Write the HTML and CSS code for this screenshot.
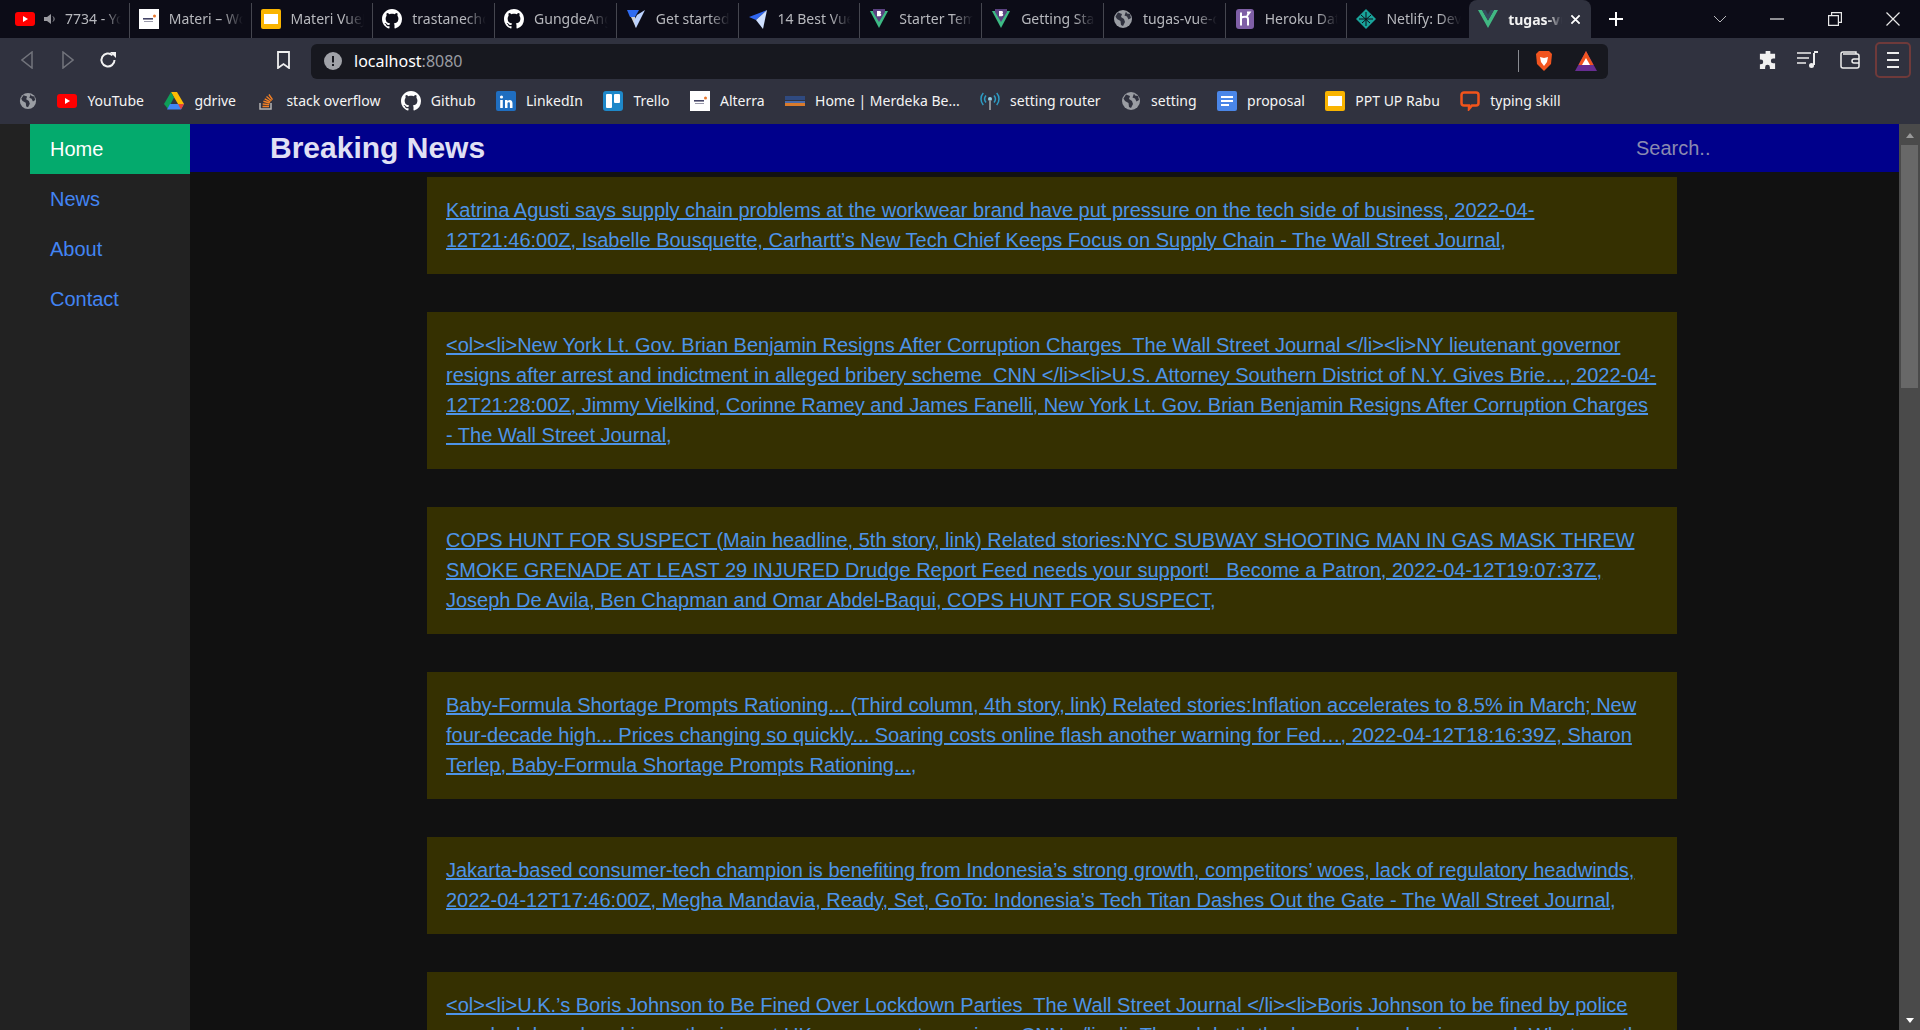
FILE: index.html
```html
<!DOCTYPE html>
<html lang="en">
<head>
<meta charset="utf-8">
<title>tugas-vue</title>
<link rel="stylesheet" href="styles.css">
</head>
<body>
<svg class="defs" width="0" height="0" aria-hidden="true">
  <symbol id="i-yt" viewBox="0 0 20 14"><rect width="20" height="14" rx="3" fill="#f00"/><path d="M8 4l5 3-5 3z" fill="#fff"/></symbol>
  <symbol id="i-alt" viewBox="0 0 20 20"><rect width="20" height="20" fill="#fff"/><rect x="4" y="9" width="10" height="1.6" fill="#446"/><rect x="5" y="12" width="9" height="1" fill="#99a"/><circle cx="15.500" cy="7" r="1.500" fill="#e8762c"/></symbol>
  <symbol id="i-sl" viewBox="0 0 20 20"><rect width="20" height="20" rx="2" fill="#f9b400"/><rect x="3" y="5" width="14" height="10" fill="#fff"/></symbol>
  <symbol id="i-gh" viewBox="0 0 16 16"><path fill="#fff" d="M8 0C3.58 0 0 3.58 0 8c0 3.54 2.29 6.53 5.47 7.59.4.07.55-.17.55-.38 0-.19-.01-.82-.01-1.49-2.01.37-2.53-.49-2.69-.94-.09-.23-.48-.94-.82-1.13-.28-.15-.68-.52-.01-.53.63-.01 1.08.58 1.23.82.72 1.21 1.87.87 2.33.66.07-.52.28-.87.51-1.07-1.78-.2-3.64-.89-3.64-3.95 0-.87.31-1.59.82-2.15-.08-.2-.36-1.02.08-2.12 0 0 .67-.21 2.2.82.64-.18 1.32-.27 2-.27.68 0 1.36.09 2 .27 1.53-1.04 2.2-.82 2.2-.82.44 1.1.16 1.92.08 2.12.51.56.82 1.27.82 2.15 0 3.07-1.87 3.75-3.65 3.95.29.25.54.73.54 1.48 0 1.07-.01 1.93-.01 2.2 0 .21.15.46.55.38A8.013 8.013 0 0016 8c0-4.42-3.58-8-8-8z"/></symbol>
  <symbol id="i-vuetify" viewBox="0 0 20 20"><path d="M10 19L5 8h4l1 3z" fill="#fff" opacity=".8"/><path d="M19 1L10 19 8 12l3-6z" fill="#bcd2ff"/><path d="M1 1h12L9 8H4z" fill="#2f6bf0"/></symbol>
  <symbol id="i-plane" viewBox="0 0 20 20"><path d="M19 1L1 8l7 3z" fill="#2f66f0"/><path d="M19 1L8 11l7 9z" fill="#cfe0ff"/></symbol>
  <symbol id="i-bv" viewBox="0 0 20 20"><path d="M1 2h18L10 19z" fill="#3dba84"/><path d="M4 0h12v3l-6 10-6-10z" fill="#5b4282"/><path d="M8 2h2.700c1.700 0 1.700 2.200.5 2.500 1.500.2 1.400 2.700-.5 2.700H8z" fill="#fff"/></symbol>
  <symbol id="i-globe" viewBox="0 0 20 20"><circle cx="10" cy="10" r="9" fill="#9a9da3"/><path d="M5 3.500l4 1.500-1 3 3 2 1 3-2 4-2-1-.5-4L4 10 2.500 7.500zM13 2.500l1 2 3 .5 1 4-2.500 1.500-1.500-3-2.500-1z" fill="#30323f"/></symbol>
  <symbol id="i-her" viewBox="0 0 20 20"><rect x="1" width="18" height="20" rx="3" fill="#7f5fa6"/><path d="M6 3.500v13M6 9c2-1.500 7-2 7 1v6.500M12 3.500l2.500 0-2.500 3.500" stroke="#fff" stroke-width="2" fill="none"/></symbol>
  <symbol id="i-net" viewBox="0 0 20 20"><path d="M10 0l10 10-10 10L0 10z" fill="#19a39a"/><path d="M3 10h14M10 3v14M5 6l9 8M15 6l-9 8" stroke="#0c0c17" stroke-width="1"/></symbol>
  <symbol id="i-vue" viewBox="0 0 20 18"><path d="M0 0h4l6 10.500L16 0h4L10 18z" fill="#41b883"/><path d="M4 0h3.500L10 4.500 12.500 0H16l-6 10.500z" fill="#35495e"/></symbol>
  <symbol id="i-drive" viewBox="0 0 20 18"><path d="M7 0h6l7 12h-6z" fill="#fbbc04"/><path d="M7 0l3 5.500L4 17 0 12z" fill="#0f9d58"/><path d="M6 12h14l-3 5.500H3z" fill="#4285f4"/><path d="M20 12l-3 5.500L14 12z" fill="#ea4335"/></symbol>
  <symbol id="i-so" viewBox="0 0 20 20"><path d="M4 12v6h11v-6" fill="none" stroke="#b4b4b4" stroke-width="1.500"/><path d="M6.500 15.500h6.500M6.700 13l6.500.6M7.400 10.300l6.300 1.700M8.700 7.800l5.700 3M10.500 5.500l5 4.200M12.900 3.500l3.600 5.200" stroke="#f48024" stroke-width="1.400"/></symbol>
  <symbol id="i-li" viewBox="0 0 20 20"><rect width="20" height="20" rx="2" fill="#1f6ec0"/><circle cx="5.500" cy="6" r="1.600" fill="#fff"/><path d="M4.200 9h2.600v8H4.200zM9 9h2.500v1.200c1.500-2 5-1.500 5 2V17h-2.600v-4.300c0-2-2.400-1.800-2.400 0V17H9z" fill="#fff"/></symbol>
  <symbol id="i-tr" viewBox="0 0 20 20"><rect width="20" height="20" rx="3" fill="#1e88c9"/><rect x="3" y="3" width="6" height="14" rx="1" fill="#fff"/><rect x="11" y="3" width="6" height="9" rx="1" fill="#fff"/></symbol>
  <symbol id="i-mb" viewBox="0 0 20 20"><rect x="0" y="5" width="20" height="4" fill="#2f4a80"/><rect x="0" y="10" width="20" height="2" fill="#4a6aa8"/><rect x="0" y="12" width="20" height="3" fill="#d97a2b"/></symbol>
  <symbol id="i-rt" viewBox="0 0 20 20"><circle cx="10" cy="8" r="2" fill="#8fd0e8"/><path d="M10 9v10" stroke="#8a8d92" stroke-width="2"/><path d="M6 4.500a5.500 5.500 0 000 7M14 4.500a5.500 5.500 0 010 7M3.300 2a9 9 0 000 12M16.700 2a9 9 0 010 12" fill="none" stroke="#2d9cc4" stroke-width="1.500"/></symbol>
  <symbol id="i-doc" viewBox="0 0 20 20"><rect width="20" height="20" rx="2" fill="#4a86e8"/><path d="M4 5h12v2H4zM4 9h12v2H4zM4 13h8v2H4z" fill="#fff"/></symbol>
  <symbol id="i-ty" viewBox="0 0 20 20"><path d="M4 1.500h12a2.500 2.500 0 012.500 2.500v8a2.500 2.500 0 01-2.500 2.500h-4L9 18v-3.500H4A2.500 2.500 0 011.500 12V4A2.500 2.500 0 014 1.500z" fill="none" stroke="#f2541b" stroke-width="2.500"/></symbol>
</svg>

<div class="browser">
  <header class="chrome">
    <div class="tabstrip">
      <div class="tabs">
        <div class="tab tab-first"><svg class="fav fav-yt"><use href="#i-yt"/></svg><svg class="speaker" viewBox="0 0 12 12"><path d="M0 4h3l4-3v10L3 8H0z" fill="#9a9aa0"/><path d="M9 3.500c1.500 1.500 1.500 3.500 0 5" stroke="#9a9aa0" fill="none"/></svg><span class="tab-label">7734 - YouTube</span></div>
        <div class="tab"><svg class="fav"><use href="#i-alt"/></svg><span class="tab-label">Materi – Work</span></div>
        <div class="tab"><svg class="fav"><use href="#i-sl"/></svg><span class="tab-label">Materi VueJS</span></div>
        <div class="tab"><svg class="fav"><use href="#i-gh"/></svg><span class="tab-label">trastanechora</span></div>
        <div class="tab"><svg class="fav"><use href="#i-gh"/></svg><span class="tab-label">GungdeAngga</span></div>
        <div class="tab"><svg class="fav"><use href="#i-vuetify"/></svg><span class="tab-label">Get started</span></div>
        <div class="tab"><svg class="fav"><use href="#i-plane"/></svg><span class="tab-label">14 Best Vue</span></div>
        <div class="tab"><svg class="fav"><use href="#i-bv"/></svg><span class="tab-label">Starter Templates</span></div>
        <div class="tab"><svg class="fav"><use href="#i-bv"/></svg><span class="tab-label">Getting Started</span></div>
        <div class="tab"><svg class="fav"><use href="#i-globe"/></svg><span class="tab-label">tugas-vue-d</span></div>
        <div class="tab"><svg class="fav"><use href="#i-her"/></svg><span class="tab-label">Heroku Data</span></div>
        <div class="tab"><svg class="fav"><use href="#i-net"/></svg><span class="tab-label">Netlify: Dev</span></div>
        <div class="tab tab-active"><svg class="fav fav-vue"><use href="#i-vue"/></svg><span class="tab-label">tugas-vue</span><svg class="tab-close" viewBox="0 0 12 12"><path d="M1.500 1.500l9 9M10.500 1.500l-9 9" stroke="#fff" stroke-width="2"/></svg></div>
      </div>
      <svg class="newtab" viewBox="0 0 16 16"><path d="M8 1v14M1 8h14" stroke="#fff" stroke-width="2"/></svg>
      <div class="winctl">
        <svg class="win-chev" viewBox="0 0 14 8"><path d="M1 1l6 6 6-6" stroke="#b8b8bc" fill="none"/></svg>
        <svg class="win-btn" viewBox="0 0 14 14"><path d="M0 7h14" stroke="#e8e8e8" stroke-width="1.200"/></svg>
        <svg class="win-btn" viewBox="0 0 14 14"><path d="M.6 3.600h9.800v9.800H.6zM3.600 3.600V.6h9.800v9.800h-3" fill="none" stroke="#e8e8e8" stroke-width="1.200"/></svg>
        <svg class="win-btn" viewBox="0 0 14 14"><path d="M.5.500l13 13M13.500.500l-13 13" stroke="#e8e8e8" stroke-width="1.200"/></svg>
      </div>
    </div>

    <div class="toolbar">
      <svg class="tb-back" viewBox="0 0 12 18"><path d="M11 1L1 9l10 8z" fill="none" stroke="#72747c" stroke-width="1.500"/></svg>
      <svg class="tb-fwd" viewBox="0 0 12 18"><path d="M1 1l10 8-10 8z" fill="none" stroke="#72747c" stroke-width="1.500"/></svg>
      <svg class="tb-reload" viewBox="0 0 18 18"><path d="M15.500 9a6.500 6.500 0 11-2-4.700" fill="none" stroke="#f2f2f2" stroke-width="2"/><path d="M11 1h6v6z" fill="#f2f2f2"/></svg>
      <svg class="tb-mark" viewBox="0 0 13 18"><path d="M1 1h11v16l-5.500-4L1 17z" fill="none" stroke="#f0f0f0" stroke-width="1.800"/></svg>
      <div class="urlbar">
        <svg class="url-info" viewBox="0 0 18 18"><circle cx="9" cy="9" r="9" fill="#a0a2a8"/><path d="M8 4h2v6.500H8zM8 12h2v2H8z" fill="#17181f"/></svg>
        <span class="url-text"><span class="url-host">localhost</span>:8080</span>
        <span class="url-div"></span>
        <svg class="url-brave" viewBox="0 0 18 22"><path d="M4 1h10l3 3-1 10-7 7-7-7L1 4z" fill="#f1541f"/><path d="M5 7l4 1 4-1-1 5-3 4-3-4z" fill="#fff"/></svg>
        <svg class="url-bat" viewBox="0 0 22 20"><path d="M11 0l11 20H0z" fill="#662d91"/><path d="M11 0l7.500 14h-15z" fill="#f1541f"/><path d="M11 7l4 7H7z" fill="#fff"/></svg>
      </div>
      <svg class="tb-puzzle" viewBox="0 0 20 20"><path d="M8 1a2.500 2.500 0 015 0v2h5v5h-2a2.500 2.500 0 000 5h2v6h-5.500v-2a2.500 2.500 0 00-5 0v2H2v-5h1a2.500 2.500 0 000-5H2V3h6z" fill="#f0f0f0"/></svg>
      <svg class="tb-list" viewBox="0 0 21 18"><path d="M0 2h14M0 7h12M0 12h9" stroke="#eee" stroke-width="1.700"/><path d="M17 2v12" stroke="#eee" stroke-width="2"/><circle cx="14.500" cy="14.500" r="2.500" fill="#eee"/><path d="M17 1h4" stroke="#eee" stroke-width="2"/></svg>
      <svg class="tb-wallet" viewBox="0 0 20 18"><path d="M16 3V1H3a2 2 0 00-2 2v12a2 2 0 002 2h14a2 2 0 002-2V5a2 2 0 00-2-2H3" fill="none" stroke="#eee" stroke-width="1.500"/><path d="M19 8h-5a2 2 0 000 4h5" fill="none" stroke="#eee" stroke-width="1.500"/></svg>
      <div class="menu-box"><span></span><span></span><span></span></div>
    </div>

    <nav class="bookmarks">
      <a class="bm"><svg class="fav fav-globe"><use href="#i-globe"/></svg></a>
      <a class="bm"><svg class="fav fav-yt"><use href="#i-yt"/></svg>YouTube</a>
      <a class="bm"><svg class="fav"><use href="#i-drive"/></svg>gdrive</a>
      <a class="bm"><svg class="fav"><use href="#i-so"/></svg>stack overflow</a>
      <a class="bm"><svg class="fav"><use href="#i-gh"/></svg>Github</a>
      <a class="bm"><svg class="fav"><use href="#i-li"/></svg>LinkedIn</a>
      <a class="bm"><svg class="fav"><use href="#i-tr"/></svg>Trello</a>
      <a class="bm"><svg class="fav"><use href="#i-alt"/></svg>Alterra</a>
      <a class="bm"><svg class="fav"><use href="#i-mb"/></svg>Home | Merdeka Be...</a>
      <a class="bm"><svg class="fav"><use href="#i-rt"/></svg>setting router</a>
      <a class="bm"><svg class="fav"><use href="#i-globe"/></svg>setting</a>
      <a class="bm"><svg class="fav"><use href="#i-doc"/></svg>proposal</a>
      <a class="bm"><svg class="fav"><use href="#i-sl"/></svg>PPT UP Rabu</a>
      <a class="bm"><svg class="fav"><use href="#i-ty"/></svg>typing skill</a>
    </nav>
  </header>

  <div class="viewport">
    <aside class="sidebar">
      <a class="side-link side-active">Home</a>
      <a class="side-link">News</a>
      <a class="side-link">About</a>
      <a class="side-link">Contact</a>
    </aside>
    <div class="page">
      <div class="topbar">
        <h1 class="title">Breaking News</h1>
        <span class="search">Search..</span>
      </div>
      <main class="feed">
        <article class="card"><a class="story" href="#">Katrina Agusti says supply chain problems at the workwear brand have put pressure on the tech side of business, 2022-04-12T21:46:00Z, Isabelle Bousquette, Carhartt’s New Tech Chief Keeps Focus on Supply Chain - The Wall Street Journal</a><span class="tail">,</span></article>
        <article class="card"><a class="story" href="#">&lt;ol&gt;&lt;li&gt;New York Lt. Gov. Brian Benjamin Resigns After Corruption Charges&nbsp; The Wall Street Journal &lt;/li&gt;&lt;li&gt;NY lieutenant governor resigns after arrest and indictment in alleged bribery scheme&nbsp; CNN &lt;/li&gt;&lt;li&gt;U.S. Attorney Southern District of N.Y. Gives Brie…, 2022-04-12T21:28:00Z, Jimmy Vielkind, Corinne Ramey and James Fanelli, New York Lt. Gov. Brian Benjamin Resigns After Corruption Charges - The Wall Street Journal</a><span class="tail">,</span></article>
        <article class="card"><a class="story" href="#">COPS HUNT FOR SUSPECT (Main headline, 5th story, link) Related stories:NYC SUBWAY SHOOTING MAN IN GAS MASK THREW SMOKE GRENADE AT LEAST 29 INJURED Drudge Report Feed needs your support!&nbsp;&nbsp; Become a Patron, 2022-04-12T19:07:37Z, Joseph De Avila, Ben Chapman and Omar Abdel-Baqui, COPS HUNT FOR SUSPECT</a><span class="tail">,</span></article>
        <article class="card"><a class="story" href="#">Baby-Formula Shortage Prompts Rationing... (Third column, 4th story, link) Related stories:Inflation accelerates to 8.5% in March; New four-decade high... Prices changing so quickly... Soaring costs online flash another warning for Fed…, 2022-04-12T18:16:39Z, Sharon Terlep, Baby-Formula Shortage Prompts Rationing...</a><span class="tail">,</span></article>
        <article class="card"><a class="story" href="#">Jakarta-based consumer-tech champion is benefiting from Indonesia’s strong growth, competitors’ woes, lack of regulatory headwinds, 2022-04-12T17:46:00Z, Megha Mandavia, Ready, Set, GoTo: Indonesia’s Tech Titan Dashes Out the Gate - The Wall Street Journal</a><span class="tail">,</span></article>
        <article class="card"><a class="story" href="#">&lt;ol&gt;&lt;li&gt;U.K.’s Boris Johnson to Be Fined Over Lockdown Parties&nbsp; The Wall Street Journal &lt;/li&gt;&lt;li&gt;Boris Johnson to be fined by police over lockdown-breaking gatherings at UK government premises&nbsp; CNN &lt;/li&gt;&lt;li&gt;Though both the law and pandemic moved. What was the rule</a></article>
      </main>
    </div>
    <div class="scrollbar">
      <span class="sb-up"></span>
      <span class="sb-thumb"></span>
      <span class="sb-down"></span>
    </div>
  </div>
</div>
</body>
</html>
```

FILE: styles.css
```css
* { box-sizing: border-box; }
html, body { margin: 0; height: 100%; overflow: hidden; }
body { background: #111; font-family: "Liberation Sans", Arial, sans-serif; }
.defs { position: absolute; }
.browser { height: 1030px; display: flex; flex-direction: column; }

.chrome { height: 124px; flex: none; background: #30323f; font-family: "Noto Sans", "Open Sans", sans-serif; }

.tabstrip { height: 38px; display: flex; align-items: stretch; background: #0c0c17; padding-left: 8px; }
.tabs { display: flex; width: 1583px; flex: none; }
.tab { width: 121.770px; flex: none; display: flex; align-items: center; padding: 0 8px 4px 9px; border-right: 1px solid #45464f; margin: 3px 0 0; color: #b7b8bd; font-size: 14px; overflow: hidden; white-space: nowrap; }
.tab:nth-last-child(2), .tab-active { border-right: 0; }
.tab .fav { margin-right: 10px; }
.tab-first { padding-left: 7px; }
.tab-first .fav { margin-right: 9px; }
.speaker { width: 12px; height: 12px; flex: none; margin-right: 9px; }
.tab-label { flex: 1; min-width: 0; overflow: hidden; -webkit-mask-image: linear-gradient(to right, #000 72%, transparent 100%); mask-image: linear-gradient(to right, #000 72%, transparent 100%); }
.tab-active { background: #30323f; border-radius: 8px 8px 0 0; margin-top: 0; padding-bottom: 0; color: #f2f2f2; font-weight: 700; }
.fav-vue { height: 18px; }
.tab-close { width: 11px; height: 11px; flex: none; margin-left: 8px; margin-right: 2px; }
.fav { width: 20px; height: 20px; flex: none; display: block; }
.fav-yt { height: 14px; }

.newtab { width: 16px; height: 16px; flex: none; align-self: center; margin-left: 17px; }
.winctl { flex: 1; display: flex; align-items: center; }
.win-chev { width: 14px; height: 8px; margin-left: 89px; margin-right: 43px; }
.win-btn { width: 14px; height: 14px; margin-right: 44px; }

.toolbar { height: 44px; display: flex; align-items: center; padding-left: 21px; }
.toolbar svg { flex: none; display: block; }
.tb-back { width: 12px; height: 18px; }
.tb-fwd { width: 12px; height: 18px; margin-left: 29px; }
.tb-reload { width: 18px; height: 18px; margin-left: 25px; }
.tb-mark { width: 13px; height: 18px; margin-left: 160px; }
.urlbar { width: 1297px; height: 35px; margin-left: 21px; margin-top: 2px; background: #17181f; border-radius: 6px; display: flex; align-items: center; padding-left: 13px; color: #9a9ca2; font-size: 16px; }
.url-info { width: 18px; height: 18px; }
.url-text { margin-left: 12px; flex: 1; }
.url-host { color: #fff; }
.url-div { width: 1px; height: 22px; background: #8a8c92; }
.url-brave { width: 18px; height: 22px; margin-left: 16px; }
.url-bat { width: 22px; height: 20px; margin-left: 22px; margin-right: 11px; }
.tb-puzzle { width: 19px; height: 19px; margin-left: 150px; }
.tb-list { width: 21px; height: 18px; margin-left: 20px; }
.tb-wallet { width: 20px; height: 18px; margin-left: 22px; }
.menu-box { width: 36px; height: 36px; margin-left: 15px; border: 2px solid #6f3a3a; border-radius: 5px; display: flex; flex-direction: column; justify-content: center; align-items: center; gap: 5px; }
.menu-box span { width: 12px; height: 2px; background: #eee; }

.bookmarks { height: 42px; display: flex; align-items: center; padding: 0 0 5px 19px; gap: 20.400px; color: #f4f4f4; font-size: 14px; white-space: nowrap; }
.bm { display: flex; align-items: center; gap: 10px; }
.fav-globe { width: 18px; height: 18px; }

.viewport { flex: 1; min-height: 0; display: flex; overflow: hidden; background: #111; }
.sidebar { width: 190px; flex: none; background: #222; padding-left: 30px; }
.side-link { display: block; height: 50px; line-height: 50px; padding-left: 20px; font-size: 20px; color: #4285f4; }
.side-active { background: #04aa6d; color: #fff; }

.page { flex: 1; min-width: 0; overflow: hidden; }
.topbar { height: 48px; background: #00008b; display: flex; align-items: center; padding-left: 80px; }
.title { margin: 0; font-size: 30px; font-weight: 700; color: #e0e0f4; flex: 1; }
.search { width: 263px; font-size: 20px; color: #8a8ab0; }

.feed { padding: 5px 0 0 237px; }
.card { width: 1250px; margin-bottom: 38px; padding: 17.500px 19px 19.500px; background: #353001; font-size: 20px; line-height: 30px; }
.story { color: #4d94e8; }
.tail { color: #4d94e8; }

.scrollbar { width: 21px; flex: none; background: #4a4a4a; display: flex; flex-direction: column; align-items: center; padding-top: 9px; }
.sb-up { width: 0; height: 0; border: 4.500px solid transparent; border-top: 0; border-bottom: 5px solid #9a9a9a; }
.sb-thumb { width: 17px; height: 243px; background: #686868; margin-top: 7px; }
.sb-down { width: 0; height: 0; border: 4.500px solid transparent; border-bottom: 0; border-top: 5px solid #fff; margin-top: auto; margin-bottom: 7px; }
```
